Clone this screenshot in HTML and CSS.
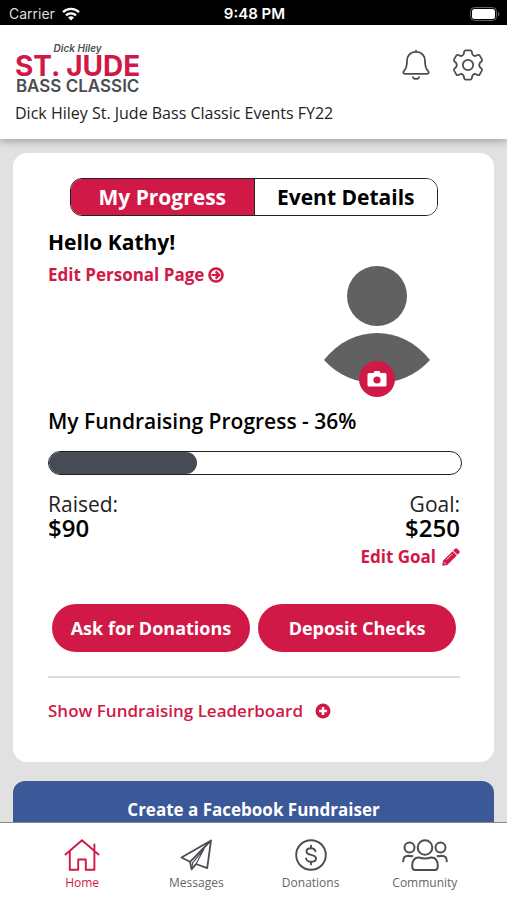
FILE: index.html
```html
<!DOCTYPE html>
<html lang="en">
<head>
    <meta charset="utf-8">
    <meta name="viewport" content="width=device-width, initial-scale=1">
    <title>St. Jude Bass Classic</title>
    <link rel="stylesheet" href="styles.css">
</head>
<body>
    <div class="status-bar">
        <div class="carrier">
            Carrier
            <svg class="wifi" viewBox="0 0 18 14" fill="none" stroke="#fff" stroke-width="2.4">
                <path d="M1 5.2a11.4 11.4 0 0 1 16 0M4 8.4a7.2 7.2 0 0 1 10 0"/>
                <path d="M9 13.6 6 10.6a4.3 4.3 0 0 1 6 0z" fill="#fff" stroke="none"/>
            </svg>
        </div>
        <div class="clock">9:48 PM</div>
        <svg class="battery" viewBox="0 0 30 14">
            <rect x="0.5" y="0.5" width="26" height="13" rx="4" fill="none" stroke="#666"/>
            <rect x="2" y="2" width="23" height="10" rx="2.5" fill="#fff"/>
            <path d="M28 4.5q3 2.5 0 5z" fill="#666"/>
        </svg>
    </div>

    <header class="header">
        <div class="header-top">
            <div class="logo">
                <span class="logo-name">Dick Hiley</span>
                <span class="logo-main">ST. JUDE</span>
                <span class="logo-sub">BASS CLASSIC</span>
            </div>
            <div class="header-actions">
                <button class="icon-button" aria-label="Notifications">
                    <svg viewBox="0 0 32 32" width="32" height="32" fill="none" stroke="#4a4d52" stroke-width="1.8" stroke-linecap="round" stroke-linejoin="round">
                        <path d="M16 1.6v1.2M16 2.8c-5.6 0-9 4-9 9.2 0 5-.6 7.6-3 9.8-1.2 1.2-.8 3 .9 3h22.2c1.7 0 2.1-1.8.9-3-2.4-2.2-3-4.8-3-9.8 0-5.2-3.4-9.2-9-9.2z"/>
                        <path d="M13 28.2c.6 2.3 5.4 2.3 6 0"/>
                    </svg>
                </button>
                <button class="icon-button" aria-label="Settings">
                    <svg viewBox="-16 -16 32 32" width="32" height="32" fill="none" stroke="#4a4d52" stroke-width="1.8" stroke-linejoin="round">
                        <path d="M-4.4-10.6-3.8-13.4Q-3.5-14.7-2.3-14.7H2.3Q3.5-14.7 3.8-13.4L4.4-10.6Q5.6-8.6 7.6-9.1L9.7-10Q11-10.5 11.7-9.4L13.9-5.6Q14.5-4.5 13.5-3.6L11.8-2Q10.5 0 11.8 2L13.5 3.6Q14.5 4.5 13.9 5.6L11.7 9.4Q11 10.5 9.7 10L7.6 9.1Q5.6 8.6 4.4 10.6L3.8 13.4Q3.5 14.7 2.3 14.7H-2.3Q-3.5 14.7-3.8 13.4L-4.4 10.6Q-5.6 8.6-7.6 9.1L-9.7 10Q-11 10.5-11.7 9.4L-13.9 5.6Q-14.5 4.5-13.5 3.6L-11.8 2Q-10.5 0-11.8-2L-13.5-3.6Q-14.5-4.5-13.9-5.6L-11.7-9.4Q-11-10.5-9.7-10L-7.6-9.1Q-5.6-8.6-4.4-10.6z"/>
                        <circle r="5.2"/>
                    </svg>
                </button>
            </div>
        </div>
        <div class="event-name">Dick Hiley St. Jude Bass Classic Events FY22</div>
    </header>

    <main class="content">
        <section class="card">
            <div class="tabs">
                <button class="tab active">My Progress</button>
                <button class="tab">Event Details</button>
            </div>

            <div class="profile">
                <div class="profile-text">
                    <h1 class="greeting">Hello Kathy!</h1>
                    <a href="#" class="link">Edit Personal Page
                        <svg viewBox="0 0 16 16" width="16" height="16" fill="none">
                            <circle cx="8" cy="8" r="6.5" stroke="currentColor" stroke-width="2.6"/>
                            <path d="M3.5 8h7.5M7.6 4.4 11.2 8 7.6 11.6" stroke="currentColor" stroke-width="2.2"/>
                        </svg>
                    </a>
                </div>
                <div class="avatar">
                    <svg viewBox="0 0 106 120" width="106" height="120" fill="#616161">
                        <circle cx="53" cy="30" r="30"/>
                        <path d="M0 94C28 58 78 58 106 94C78 125 28 125 0 94z"/>
                    </svg>
                    <button class="camera" aria-label="Change photo">
                        <svg viewBox="0 0 20 16" width="20" height="16">
                            <path d="M2 2h4.5l1-2h5l1 2H18q1.5 0 1.5 1.5v10.5q0 1.5-1.5 1.5H2Q.5 15.5.5 14V3.5Q.5 2 2 2z" fill="#fff"/>
                            <circle cx="10" cy="9" r="3.6" fill="#d11947"/>
                        </svg>
                    </button>
                </div>
            </div>

            <h2 class="progress-title">My Fundraising Progress - 36%</h2>
            <div class="progress" role="progressbar" aria-label="Fundraising progress" aria-valuenow="36" aria-valuemin="0" aria-valuemax="100">
                <div class="progress-fill" style="width: 36%"></div>
            </div>

            <div class="amounts">
                <div>
                    <div class="amount-label">Raised:</div>
                    <div class="amount">$90</div>
                </div>
                <div class="goal">
                    <div class="amount-label">Goal:</div>
                    <div class="amount">$250</div>
                    <a href="#" class="link goal-link">Edit Goal
                        <svg viewBox="0 0 18 18" width="18" height="18" fill="currentColor">
                            <path d="M13 .8q1.1-1.1 2.2 0l2 2q1.1 1.1 0 2.2l-1.8 1.8L11.2 2.6z"/>
                            <path d="M10.6 3.2l4.2 4.2-9.6 9.6L.2 17.8 1 12.8z"/>
                            <path d="M4.6 11.6l5.8-5.8M2 14.2l1.800 1.800" stroke="#fff" stroke-width="0.8"/>
                        </svg>
                    </a>
                </div>
            </div>

            <div class="actions">
                <button class="pill">Ask for Donations</button>
                <button class="pill">Deposit Checks</button>
            </div>

            <hr class="divider">

            <a href="#" class="link leaderboard">Show Fundraising Leaderboard
                <svg viewBox="0 0 16 16" width="16" height="16">
                    <circle cx="8" cy="8" r="7.5" fill="currentColor"/>
                    <path d="M8 4v8M4 8h8" stroke="#fff" stroke-width="2.4"/>
                </svg>
            </a>
        </section>

        <button class="facebook">Create a Facebook Fundraiser</button>
    </main>

    <nav class="nav">
        <a href="#" class="nav-item active">
            <svg viewBox="0 0 36 32" width="36" height="32" fill="none" stroke="currentColor" stroke-width="1.9" stroke-linejoin="round" stroke-linecap="round">
                <path d="M1.5 15.5 18 1.2l16.5 14.3M5.8 12v18.8h8.4V20.5h7.6v10.3h8.6V12M30.4 11V5.5"/>
            </svg>
            Home
        </a>
        <a href="#" class="nav-item">
            <svg viewBox="0 0 32 32" width="32" height="32" fill="none" stroke="#4a4d52" stroke-width="1.8" stroke-linejoin="round">
                <path d="M31 1.500 1.5 18.5l8.500 4.300L31 1.500l-3.800 27.700-11.200-4.200M10 22.800l1.600 7.500 4.400-5.300"/>
                <path d="M11.600 30.300l1-6.500L24 10l-8 15z" stroke-width="1.2"/>
            </svg>
            Messages
        </a>
        <a href="#" class="nav-item">
            <svg viewBox="0 0 32 32" width="32" height="32" fill="none" stroke="#4a4d52" stroke-width="1.9" stroke-linecap="round">
                <circle cx="16" cy="16" r="14.8"/>
                <path d="M20.5 12.2c-.6-2-2.3-3-4.5-3-2.6 0-4.5 1.2-4.5 3.2 0 4.6 9.5 2.4 9.5 7 0 2.2-2.1 3.4-5 3.4-2.6 0-4.5-1.2-5-3.4M16 6.6v2.6M16 22.8v2.6"/>
            </svg>
            Donations
        </a>
        <a href="#" class="nav-item">
            <svg viewBox="0 0 46 32" width="46" height="32" fill="none" stroke="#4a4d52" stroke-width="2" stroke-linecap="round">
                <circle cx="23" cy="8.5" r="7.3"/>
                <circle cx="7.5" cy="8.5" r="5"/>
                <circle cx="38.5" cy="8.5" r="5"/>
                <path d="M1.2 22.2c0-4 2.8-5.4 5.2-5.4q2.3.6 4 .2M44.8 22.2c0-4-2.8-5.4-5.2-5.4q-2.3.6-4 .2"/>
                <path d="M17 18.5q6 2 12 0c4.5-.3 6.8 3 6.8 8.5 0 3-.8 4-3 4H13.2c-2.2 0-3-1-3-4 0-5.5 2.3-8.8 6.8-8.5z"/>
            </svg>
            Community
        </a>
    </nav>
</body>
</html>
```

FILE: styles.css
```css
* {
    box-sizing: border-box;
}

body {
    margin: 0;
    height: 100vh;
    display: flex;
    flex-direction: column;
    background-color: #e1e1e1;
    color: #000;
    font-family: "Open Sans", "Noto Sans", sans-serif;
    font-size: 16px;
}

button {
    font-family: inherit;
    border: none;
    padding: 0;
    cursor: pointer;
}

svg {
    display: block;
    flex-shrink: 0;
}

/* Status bar */
.status-bar {
    display: grid;
    grid-template-columns: 1fr auto 1fr;
    align-items: center;
    padding: 2px 7px 0 9px;
    height: 25px;
    background-color: #000;
    color: #fff;
    font-family: Inter, "Liberation Sans", sans-serif;
    font-size: 14px;
}

.carrier {
    display: flex;
    align-items: center;
    gap: 7px;
    color: #ddd;
}

.wifi {
    width: 18px;
    height: 14px;
}

.clock {
    font-size: 15px;
    font-weight: 600;
}

.battery {
    width: 30px;
    height: 14px;
    justify-self: end;
}

/* Header */
.header {
    position: relative;
    padding: 17px 23px 16px 15px;
    background-color: #fff;
    box-shadow: 0 2px 8px rgba(0, 0, 0, 0.3);
}

.header-top {
    display: flex;
    justify-content: space-between;
}

.logo {
    display: flex;
    flex-direction: column;
    align-items: center;
    font-family: Inter, sans-serif;
    font-weight: 600;
    color: #4a4d52;
}

.logo-name {
    font-size: 10px;
    line-height: 12px;
    font-style: italic;
}

.logo-main {
    font-size: 28px;
    line-height: 24px;
    font-weight: 700;
    color: #d11947;
}

.logo-sub {
    font-size: 17px;
    line-height: 17px;
}

.header-actions {
    display: flex;
    align-items: center;
    gap: 20px;
    height: 45px;
}

.icon-button {
    background: none;
}

.event-name {
    margin-top: 8px;
    font-size: 16px;
    line-height: 20px;
    color: #222;
}

/* Main content */
.content {
    flex: 1;
    min-height: 0;
    overflow: hidden;
    padding: 14px 13px 0;
}

.card {
    padding: 25px 34px 39px 35px;
    background-color: #fff;
    border-radius: 14px;
}

.tabs {
    display: flex;
    margin: 0 22px;
    height: 38px;
    border: 1px solid #222;
    border-radius: 12px;
    overflow: hidden;
}

.tab {
    flex: 1;
    background-color: #fff;
    color: #000;
    font-size: 21px;
    font-weight: 700;
}

.tab.active {
    background-color: #d11947;
    color: #fff;
    border-right: 1px solid #222;
}

.profile {
    display: flex;
    justify-content: space-between;
    padding: 12px 30px 0 0;
}

.greeting {
    margin: 0 0 7px;
    font-size: 21px;
    line-height: 28px;
    font-weight: 700;
}

.link {
    display: flex;
    align-items: center;
    gap: 4px;
    font-size: 17px;
    line-height: 24px;
    font-weight: 700;
    color: #d11947;
    text-decoration: none;
}

.avatar {
    position: relative;
    padding: 38px 0 11px;
}

.camera {
    position: absolute;
    left: 50%;
    bottom: 0;
    display: flex;
    align-items: center;
    justify-content: center;
    width: 36px;
    height: 36px;
    transform: translateX(-50%);
    border-radius: 50%;
    background-color: #d11947;
}

.progress-title {
    margin: 9px 0 15px;
    font-size: 21px;
    line-height: 30px;
    font-weight: 600;
}

.progress {
    height: 24px;
    margin-right: -2px;
    border: 1px solid #222;
    border-radius: 12px;
    overflow: hidden;
}

.progress-fill {
    height: 100%;
    border-radius: 12px;
    background-color: #464b56;
}

.amounts {
    display: flex;
    justify-content: space-between;
    padding-top: 17px;
}

.goal {
    text-align: right;
}

.amount-label {
    font-size: 21px;
    line-height: 24px;
    color: #222;
}

.amount {
    font-size: 24px;
    line-height: 24px;
    font-weight: 600;
}

.goal-link {
    gap: 6px;
    margin-top: 5px;
}

.actions {
    display: flex;
    gap: 8px;
    margin: 35px 4px 0;
}

.pill {
    flex: 1;
    height: 48px;
    border-radius: 24px;
    background-color: #d11947;
    color: #fff;
    font-size: 18px;
    font-weight: 700;
}

.divider {
    margin: 24px 0 21px;
    border: none;
    border-top: 2px solid #ddd;
}

.leaderboard {
    gap: 12px;
    font-weight: 600;
}

.facebook {
    display: block;
    width: 100%;
    height: 56px;
    margin-top: 19px;
    border-radius: 12px 12px 0 0;
    background-color: #3b5998;
    color: #fff;
    font-size: 17px;
    font-weight: 700;
}

/* Bottom navigation */
.nav {
    display: flex;
    justify-content: center;
    height: 78px;
    padding: 16px 25px 0;
    background-color: #fff;
    border-top: 1px solid #888;
}

.nav-item {
    flex: 1;
    display: flex;
    flex-direction: column;
    align-items: center;
    gap: 4px;
    font-size: 12px;
    line-height: 16px;
    color: #666;
    text-decoration: none;
}

.nav-item.active {
    color: #d11947;
}
```
